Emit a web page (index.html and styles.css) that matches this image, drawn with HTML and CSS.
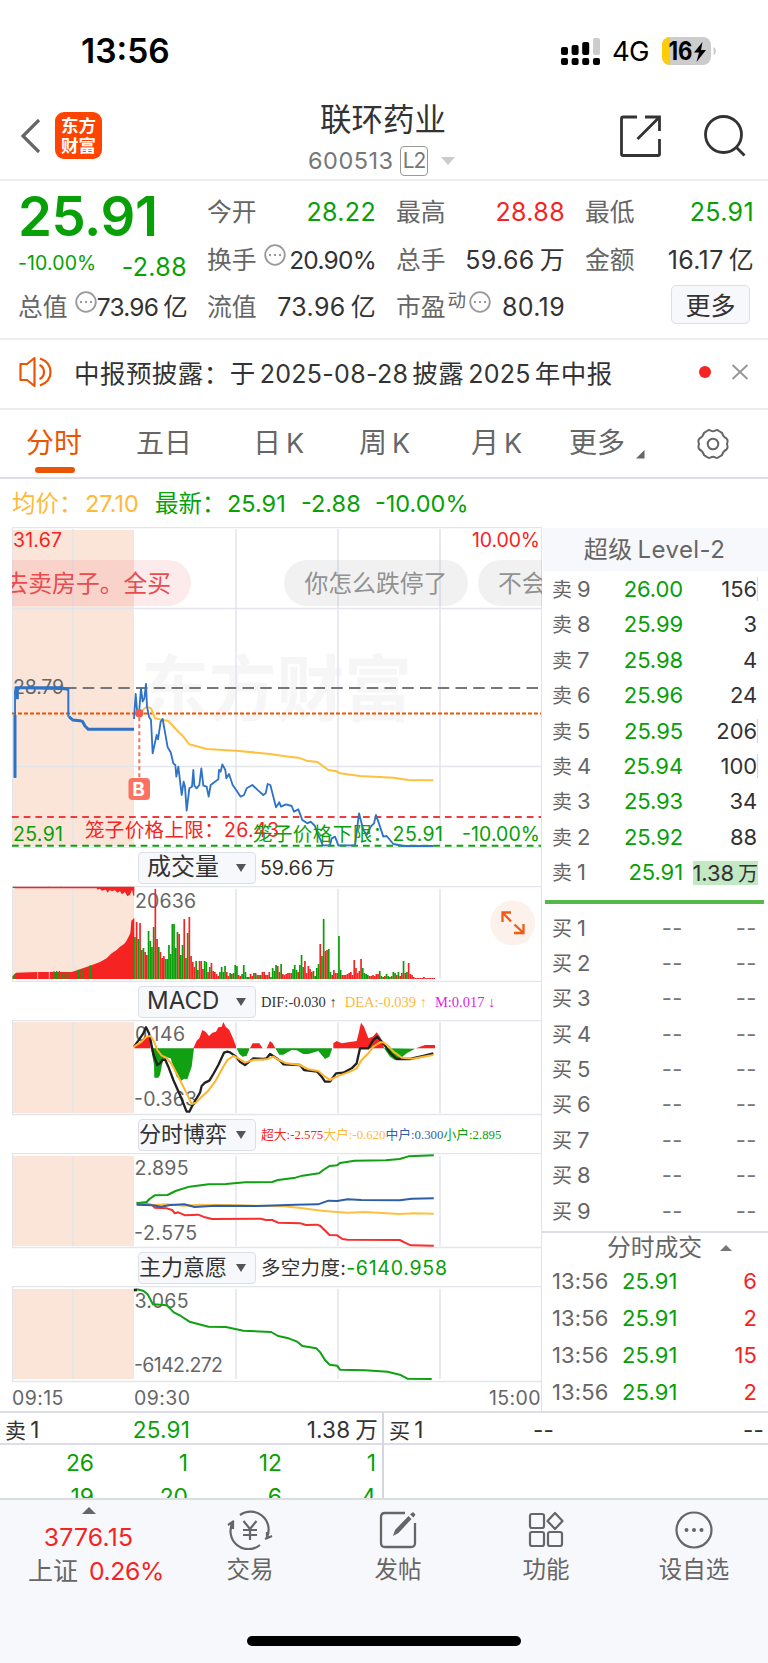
FILE: index.html
```html
<!DOCTYPE html>
<html lang="zh-CN">
<head>
<meta charset="utf-8">
<title>联环药业 600513</title>
<link rel="stylesheet" href="styles.css">
</head>
<body>
<div class="status">
  <span class="clock">13:56</span>
  <svg class="signal" width="40" height="28" viewBox="0 0 40 28"><g fill="#000"><rect x="0" y="9" width="7" height="8" rx="2"/><rect x="10.600000000000001" y="7" width="7" height="10" rx="2"/><rect x="21.2" y="4" width="7" height="13" rx="2"/><rect x="0" y="20" width="7" height="7" rx="2"/><rect x="10.6" y="20" width="7" height="7" rx="2"/><rect x="21.2" y="20" width="7" height="7" rx="2"/><rect x="32" y="20" width="7" height="7" rx="2"/></g><rect x="32" y="0" width="7" height="17" rx="2" fill="#ccc"/></svg>
  <span class="net">4G</span>
  <svg class="battery" width="56" height="28" viewBox="0 0 56 28"><defs><clipPath id="cell"><rect width="49" height="28" rx="8"/></clipPath></defs><g clip-path="url(#cell)"><rect width="49" height="28" fill="#ccc"/><rect width="8" height="28" fill="#ffcc0a"/></g><path d="M51.500 10Q54 11 54 14T51.500 18Z" fill="#ccc"/><text x="6.500" y="23" textLength="24" lengthAdjust="spacingAndGlyphs" font-weight="700" font-size="25">16</text><path d="M40.500 5L32 15.500H37L34.500 25L44 13H39Z"/></svg>
</div>

<header class="head">
  <svg class="back" width="22" height="36" viewBox="0 0 22 36"><path d="M19 2L3 18L19 34" fill="none" stroke="#666" stroke-width="3.200"/></svg>
  <div class="logo">东方<br>财富</div>
  <div class="title">
    <div class="name">联环药业</div>
    <div class="code"><span>600513</span><b>L2</b><i></i></div>
  </div>
  <svg class="share" width="44" height="44" viewBox="0 0 44 44"><path d="M18 3H4Q2.500 3 2.500 4.500V40Q2.500 41.500 4 41.500H39Q40.500 41.500 40.500 40V25M26 3H40.500V17M40 3.500L18.500 25" fill="none" stroke="#333" stroke-width="2.800"/></svg>
  <svg class="search" width="44" height="44" viewBox="0 0 44 44"><circle cx="20.500" cy="20.500" r="18" fill="none" stroke="#333" stroke-width="2.800"/><path d="M33 33L41.500 41.500" stroke="#333" stroke-width="2.800"/></svg>
</header>

<section class="quote">
  <div class="col">
    <div class="price">25.91</div>
    <div class="pair chg"><span class="pct">-10.00%</span><span>-2.88</span></div>
    <div class="pair tight"><label>总值</label><svg class="info" viewBox="0 0 22 22"><circle cx="11" cy="11" r="9.800"/><path d="M5 11h2M10 11h2M15 11h2"/></svg><span>73.96<em>亿</em></span></div>
  </div>
  <div class="col">
    <div class="pair"><label>今开</label><span class="g">28.22</span></div>
    <div class="pair tight"><label>换手</label><svg class="info" viewBox="0 0 22 22"><circle cx="11" cy="11" r="9.800"/><path d="M5 11h2M10 11h2M15 11h2"/></svg><span>20.90%</span></div>
    <div class="pair"><label>流值</label><span>73.96<em>亿</em></span></div>
  </div>
  <div class="col">
    <div class="pair"><label>最高</label><span class="r">28.88</span></div>
    <div class="pair"><label>总手</label><span>59.66<em>万</em></span></div>
    <div class="pair"><label>市盈<sup>动</sup></label><svg class="info near" viewBox="0 0 22 22"><circle cx="11" cy="11" r="9.800"/><path d="M5 11h2M10 11h2M15 11h2"/></svg><span>80.19</span></div>
  </div>
  <div class="col">
    <div class="pair"><label>最低</label><span class="g">25.91</span></div>
    <div class="pair"><label>金额</label><span>16.17<em>亿</em></span></div>
    <div class="pair"><button class="more">更多</button></div>
  </div>
</section>

<section class="notice">
  <svg width="34" height="32" viewBox="0 0 34 32" fill="none" stroke="#ea5504" stroke-width="2.200" stroke-linejoin="round"><path d="M15.500 2L8 8H1.500V24H8L15.500 30Z"/><path d="M21 2.500Q31.500 6 31.500 16T21 29.500M20.500 9Q25 11 25 16T20.500 23"/></svg>
  <span class="msg">中报预披露：于<em>2025-08-28</em>披露<em>2025</em>年中报</span>
  <i class="dot"></i>
  <svg width="18" height="18" viewBox="0 0 18 18"><path d="M1.500 2L16.500 16M16.500 2L1.500 16" stroke="#999" stroke-width="2"/></svg>
</section>

<nav class="tabs">
  <span class="on">分时</span><span>五日</span><span>日<em>K</em></span><span>周<em>K</em></span><span>月<em>K</em></span><span>更多</span>
  <svg class="corner" width="9" height="9" viewBox="0 0 9 9"><path d="M8.500 0V8.500H0Z" fill="#666"/></svg>
  <svg class="gear" width="34" height="34" viewBox="0 0 34 34" fill="none" stroke="#666" stroke-width="2"><path d="M11 4Q13 2.500 14.500 3.500Q17 5 19.500 3.500Q21 2.500 23 4L26 6Q27.200 10 30.500 11.500Q32 13 31.500 15Q30.500 17 31.500 19Q32 21 30.500 22.500Q27.200 24 26 28L23 30Q21 31.500 19.500 30.500Q17 29 14.500 30.500Q13 31.500 11 30L8 28Q6.800 24 3.500 22.500Q2 21 2.500 19Q3.500 17 2.500 15Q2 13 3.500 11.500Q6.800 10 8 6Z"/><circle cx="17" cy="17" r="5.300"/></svg>
</nav>

<div class="avg"><span class="y">均价：</span><span class="y v1">27.10</span><span class="g">最新：</span><span class="g v2">25.91</span><span class="g v3">-2.88</span><span class="g">-10.00%</span></div>

<main class="board">
  <div class="charts">
    <svg class="plot" width="530" height="321" viewBox="12 527 530 321">
      <text x="141" y="715" font-size="72" font-weight="700" fill="#f6f6f6" textLength="271" lengthAdjust="spacingAndGlyphs">东方财富</text>
      <rect x="12" y="530" width="122" height="316" fill="#fbe5d9"/>
      <path class="grid" d="M73 529V847M236 529V847M338 529V847M440 529V847M12 608.500H541M12 766.500H541M12 847.500H541M12 527.500H541M12.500 527V848"/>
      <path d="M0 560H168a23 23 0 0 1 0 46H0Z" fill="#eb3c46" fill-opacity=".11"/>
      <rect x="284" y="560" width="184" height="46" rx="23" fill="#777" fill-opacity=".1"/>
      <rect x="478" y="560" width="160" height="46" rx="23" fill="#777" fill-opacity=".1"/>
      <g font-size="23.800"><text x="4.500" y="592" fill="#e94b4f">去卖房子。全买</text><text x="304.500" y="592" fill="#929292">你怎么跌停了</text><text x="498" y="592" fill="#929292">不会</text></g>
      <path d="M65 688H541" stroke="#777" stroke-width="2" stroke-dasharray="11.500 6.250" stroke-dashoffset="0"/>
      <path d="M12 713.500H541" stroke="#ea5504" stroke-width="2" stroke-dasharray="4 2"/>
      <path d="M12 817H541" stroke="#ee3b40" stroke-width="2" stroke-dasharray="6.700 5"/>
      <path d="M12 845.700H541" stroke="#11a011" stroke-width="2" stroke-dasharray="6.700 5"/>
      <text class="ax" x="13" y="694" textLength="51" fill="#666">28.79</text>
      <g transform="translate(0 520) scale(.33333)" fill="none" stroke-linejoin="round">
        <path stroke="#ffc040" stroke-width="6" d="M425 572L440 560 453 565 465 595 490 600 505 603 530 630 550 650 568 673 620 687 708 692 810 702 850 708 895 713 920 722 952 726 985 750 1010 754 1020 760 1080 768 1180 773 1225 780 1300 781"/>
        <path stroke="#2f73c4" stroke-width="6" d="M45 503L205 508V590"/>
        <path stroke="#2f73c4" stroke-width="9" d="M45 773V585M48 510V503H95L180 503 205 508M52 510V538M207 590L218 600 240 602 248 605 255 618 265 628 402 628"/>
        <path stroke="#2f73c4" stroke-width="5.500" d="M45 773V510M402 597L407 522 412 580 418 568 423 505 428 545 433 535 438 492 441 560 447 590 453 600 458 700 470 645 474 658 482 605 488 597 503 682 512 697 520 730 526 735 529 770 535 740 545 825 551 785 555 800 560 872 568 805 576 800 580 750 583 797 590 805 598 795 604 745 610 797 620 800 626 830 632 795 645 785 655 778 657 750 662 755 667 733 676 750 679 775 687 762 698 795 712 815 722 830 732 825 740 805 757 795 775 812 790 825 797 820 803 792 811 795 820 830 828 862 838 847 843 860 858 853 875 858 882 875 895 868 907 900 922 910 932 905 945 918 952 940 962 960 968 976 990 976 995 955 1005 950 1015 976 1065 976 1077 880 1090 930 1100 945 1112 920 1122 910 1128 885 1135 905 1150 950 1160 948 1180 972 1210 978 1300 978"/>
        <path stroke="#f27466" stroke-width="6" stroke-dasharray="12 9" d="M418 592V772"/>
      </g>
      <circle cx="139.300" cy="713.300" r="4.300" fill="#ee5b4f"/>
      <rect x="128.500" y="778" width="21.500" height="22" rx="4" fill="#fb7262"/>
      <text x="132.300" y="796" font-size="19" font-weight="700" fill="#fff">B</text>
      <text class="ax" x="13" y="547" textLength="49" fill="#f62323">31.67</text>
      <text class="ax" x="472" y="547" textLength="68" fill="#f62323">10.00%</text>
      <text class="ax" x="13" y="841" textLength="50" fill="#07a007">25.91</text>
      <text x="85" y="837" font-size="19.500" textLength="194" fill="#f62323">笼子价格上限：26.43</text>
      <text x="253" y="841" font-size="19.500" textLength="190" fill="#07a007">笼子价格下限：25.91</text>
      <text class="ax" x="462" y="841" textLength="78" fill="#07a007">-10.00%</text>
    </svg>

    <div class="ind"><span class="pick wide">成交量<i></i></span><span class="val">59.66<em>万</em></span></div>
    <svg class="plot" width="530" height="96" viewBox="12 886 530 96">
      <rect x="12" y="887" width="122" height="92" fill="#fbe5d9"/>
      <path class="grid" d="M73 889V979M236 889V979M338 889V979M440 889V979M12 886.500H541M12 981.500H541M12.500 886V982"/>
      <text class="ax" x="135" y="908" textLength="61" fill="#666">20636</text>
      <g transform="translate(0 850) scale(.33333)">
        <path fill="#f62323" d="M38 387V378L48 368 110 366 215 366 240 358 270 347 300 336 320 325 335 310 350 300 360 290 372 282 378 275 385 262 391 250 394 212 403 203V387ZM45 110V115H290L293 119 300 116 305 122 318 119 322 128 330 120 335 124 345 121 352 128 360 124 366 133 375 126 382 139 390 134 396 120 400 137 403 137V110Z"/>
        <path stroke="#11a011" stroke-width="4" d="M40 387V378M45 387V372M162 387V364M170 387V363M178 387V363M185 387V372M190 387V371M196 387V371M202 387V368M208 387V367M236 387V359M246 387V356M271 387V346M38 112H47M145 112H149M179 112H184"/>
        <path stroke="#fff" stroke-width="2" d="M113 366V387M148 366V387"/>
      </g>
      <g id="volume"></g>
      <circle cx="512.700" cy="923" r="22.500" fill="#fdf1eb"/>
      <path d="M502.500 922V912.500H511M503.500 913.500L511 921.500M523.500 924V933H514M522.500 932L514.500 924.500" fill="none" stroke="#ef5b14" stroke-width="2.300"/>
    </svg>

    <div class="ind"><span class="pick wide">MACD<i></i></span><span class="serif">DIF:-0.030 ↑</span><span class="serif y s2">DEA:-0.039 ↑</span><span class="serif m s3">M:0.017 ↓</span></div>
    <svg class="plot" width="530" height="96" viewBox="12 1020 530 96">
      <rect x="12" y="1022" width="122" height="91" fill="#fbe5d9"/>
      <path class="grid" d="M73 1022V1113M236 1022V1113M338 1022V1113M440 1022V1113M12 1020.500H541M12 1114.500H541M12.500 1020V1115"/>
      <text class="ax" x="135" y="1041" textLength="50" fill="#666">0.146</text>
      <text class="ax" x="134" y="1106" textLength="63" fill="#666">-0.363</text>
      <g transform="translate(0 850) scale(.33333)">
        <path fill="#f62323" d="M402 595L410 582 425 575 435 560 446 558 452 575V595ZM580 595L590 572 598 565 607 540 617 545 627 558 637 548 648 545 655 532 665 530 670 516 677 530 688 540 697 560 708 588V595ZM750 595L758 580 778 580 788 595ZM800 595L810 573 818 580 826 595ZM1000 595V580L1010 573 1025 580 1070 573 1076 550 1083 518 1092 530 1105 565 1118 560 1130 547 1140 560 1150 585 1152 595ZM1248 595L1275 585H1305V595Z"/>
        <path fill="#11a011" d="M453 595L462 645 463 683 475 683 480 675 486 645 492 620 512 625 518 645 530 680 545 692 552 686 562 688 575 650 582 595ZM710 595L718 612 728 620 740 617 748 598V595ZM826 595L838 614 850 614 860 608 875 600 890 601 910 612 925 612 955 603 965 615 975 627 988 620 996 598V595ZM1152 595L1170 620 1185 630 1200 626 1220 610 1245 596Z"/>
        <path stroke="#777" stroke-opacity=".35" d="M402 595H1305"/>
        <g fill="none" stroke-linejoin="round"><path stroke="#222" stroke-width="7" d="M402 590L415 572 430 550 438 532 447 550 452 572 460 612 472 645 480 640 487 630 495 628 505 650 520 690 540 735 560 785 568 785 578 765 600 728 605 708 615 698 628 692 640 672 655 645 672 608 682 605 690 607 708 620 720 635 735 645 745 637 760 625 790 627 800 625 810 612 825 622 840 632 850 643 900 645 912 660 952 665 965 680 975 695 990 695 1008 670 1030 668 1055 655 1070 640 1080 595 1105 595 1120 570 1132 560 1150 580 1170 608 1190 627 1230 627 1270 618 1300 610"/>
        <path stroke="#ffb52a" stroke-width="6" d="M402 590L425 575 440 560 452 558 462 575 472 600 485 617 498 622 515 642 535 680 560 730 575 762 588 758 605 740 625 722 645 695 670 650 682 630 700 618 715 625 735 638 760 630 800 628 820 620 840 632 860 640 900 645 925 658 955 663 975 680 990 690 1010 680 1050 665 1070 655 1085 630 1105 610 1120 590 1140 577 1150 577 1165 588 1180 605 1205 623 1240 626 1270 620 1300 615"/></g>
      </g>
    </svg>

    <div class="ind low"><span class="pick">分时博弈<i></i></span><span class="serif sm"><b class="r">超大:-2.575</b><b class="y">大户:-0.620</b><b class="b">中户:0.300</b><b class="g">小户:2.895</b></span></div>
    <svg class="plot" width="530" height="96" viewBox="12 1153 530 96">
      <rect x="12" y="1156" width="122" height="90" fill="#fbe5d9"/>
      <path class="grid" d="M73 1156V1246M236 1156V1246M338 1156V1246M440 1156V1246M12 1153.500H541M12 1247.500H541M12.500 1153V1248"/>
      <text class="ax" x="134.500" y="1175" textLength="54" fill="#666">2.895</text>
      <text class="ax" x="134" y="1240" textLength="63" fill="#666">-2.575</text>
      <g transform="translate(0 1110) scale(.3476 .33333)" fill="none" stroke-width="6" stroke-linejoin="round">
        <path stroke="#f62f2f" d="M393 278L420 282 438 285 445 293 480 295 495 300 503 310 513 307 533 316 570 314 590 322 610 327 750 326 765 330 783 330 800 338 865 340 880 345 912 344 922 348 948 375 970 376 985 387 1000 389 1150 390 1165 398 1182 406 1248 407"/>
        <path stroke="#ffc040" d="M393 282L440 285 480 283 530 287 575 284 690 286 815 289 865 294 925 302 960 305 1000 308 1048 306 1150 312 1190 310 1248 311"/>
        <path stroke="#2f5ea8" d="M393 284L440 286 463 290 490 285 530 283 560 291 620 287 740 288 850 284 915 283 945 272 970 273 1000 268 1040 270 1150 271 1185 266 1248 265"/>
        <path stroke="#11a011" d="M393 280L422 276 430 267 445 256 482 255 505 243 545 230 600 223 650 222 705 217 783 216 800 210 850 203 870 197 918 190 930 180 948 168 970 166 978 159 1020 152 1110 151 1150 147 1175 139 1248 136"/>
      </g>
    </svg>

    <div class="ind low"><span class="pick">主力意愿<i></i></span><span class="val v">多空力度:<b class="g">-6140.958</b></span></div>
    <svg class="plot" width="530" height="97" viewBox="12 1286 530 97">
      <rect x="12" y="1289" width="122" height="90" fill="#fbe5d9"/>
      <path class="grid" d="M73 1289V1379M236 1289V1379M338 1289V1379M440 1289V1379M12 1286.500H541M12 1381.500H541M12.500 1286V1382"/>
      <text class="ax" x="134.500" y="1308" textLength="54" fill="#666">3.065</text>
      <text class="ax" x="134" y="1372" textLength="89" fill="#666">-6142.272</text>
      <g transform="translate(0 1110) scale(.3476 .33333)" fill="none"><path stroke="#11a011" stroke-width="6" stroke-linejoin="round" d="M393 538L412 542 425 553 440 583 480 586 500 607 520 618 545 635 600 650 650 651 700 662 780 666 800 678 830 685 855 695 870 708 910 715 922 728 935 750 948 764 970 767 978 779 1050 781 1115 785 1150 794 1172 806 1242 807"/><path stroke="#222" stroke-width="8" d="M385 540H394"/></g>
    </svg>
    <div class="times"><span>09:15</span><span class="t2">09:30</span><span class="t3">15:00</span></div>
  </div>

  <aside class="book">
    <div class="lv">超级<em>Level-2</em></div>
    <div class="rows sell">
      <div><label>卖<em>9</em></label><span>26.00</span><b class="tick">156</b></div>
      <div><label>卖<em>8</em></label><span>25.99</span><b>3</b></div>
      <div><label>卖<em>7</em></label><span>25.98</span><b>4</b></div>
      <div><label>卖<em>6</em></label><span>25.96</span><b>24</b></div>
      <div><label>卖<em>5</em></label><span>25.95</span><b class="tick">206</b></div>
      <div><label>卖<em>4</em></label><span>25.94</span><b class="tick">100</b></div>
      <div><label>卖<em>3</em></label><span>25.93</span><b>34</b></div>
      <div><label>卖<em>2</em></label><span>25.92</span><b>88</b></div>
      <div><label>卖<em>1</em></label><span>25.91</span><b class="fill">1.38<em>万</em></b></div>
    </div>
    <div class="bar"></div>
    <div class="rows buy">
      <div><label>买<em>1</em></label><span>--</span><b>--</b></div>
      <div><label>买<em>2</em></label><span>--</span><b>--</b></div>
      <div><label>买<em>3</em></label><span>--</span><b>--</b></div>
      <div><label>买<em>4</em></label><span>--</span><b>--</b></div>
      <div><label>买<em>5</em></label><span>--</span><b>--</b></div>
      <div><label>买<em>6</em></label><span>--</span><b>--</b></div>
      <div><label>买<em>7</em></label><span>--</span><b>--</b></div>
      <div><label>买<em>8</em></label><span>--</span><b>--</b></div>
      <div><label>买<em>9</em></label><span>--</span><b>--</b></div>
    </div>
    <div class="deal">分时成交<i></i></div>
    <div class="trades">
      <div><label>13:56</label><span>25.91</span><b>6</b></div>
      <div><label>13:56</label><span>25.91</span><b>2</b></div>
      <div><label>13:56</label><span>25.91</span><b>15</b></div>
      <div><label>13:56</label><span>25.91</span><b>2</b></div>
    </div>
  </aside>
</main>

<section class="queue">
  <div class="half left">
    <div class="top"><label>卖<em>1</em></label><span class="g">25.91</span><b>1.38<em>万</em></b></div>
    <div class="nums"><span>26</span><span>1</span><span>12</span><span>1</span><span>19</span><span>20</span><span>6</span><span>4</span></div>
  </div>
  <div class="half">
    <div class="top"><label>买<em>1</em></label><span>--</span><b>--</b></div>
  </div>
</section>

<footer class="dock">
  <div class="index"><i></i><div class="pt">3776.15</div><div class="ln">上证<em>0.26%</em></div></div>
  <div class="items">
    <div><svg width="46" height="40" viewBox="0 0 46 40" fill="none" stroke="#666" stroke-width="2.200"><path d="M13 5A18 18 0 0 1 40 27M33 35A18 18 0 0 1 6 12M1 15L7 11M6 12V19M45 26L38 29M40 29V22M16.500 11L23 19L29.500 11M23 19V30M16 20H30M16 25H30"/></svg><span>交易</span></div>
    <div><svg width="46" height="40" viewBox="0 0 46 40"><path d="M30 3H10Q6 3 6 7V33Q6 37 10 37H36Q40 37 40 33V13" fill="none" stroke="#666" stroke-width="2.300"/><path d="M18 26L20 20L33.500 6L36.500 9L23.500 23ZM35 4.500L38 2L40.500 4.500L38.500 7.500Z" fill="#666"/></svg><span>发帖</span></div>
    <div><svg width="46" height="40" viewBox="0 0 46 40" fill="none" stroke="#666" stroke-width="2.200"><rect x="7" y="4" width="14" height="14" rx="2"/><rect x="7" y="22" width="14" height="14" rx="2"/><rect x="25" y="22" width="14" height="14" rx="2"/><path d="M32 3L39.500 11L32 19L24.500 11Z" stroke-linejoin="round"/></svg><span>功能</span></div>
    <div><svg width="46" height="40" viewBox="0 0 46 40"><circle cx="23" cy="20" r="17.500" fill="none" stroke="#666" stroke-width="2.200"/><g fill="#666"><circle cx="15.500" cy="20" r="2"/><circle cx="23" cy="20" r="2"/><circle cx="30.500" cy="20" r="2"/></g></svg><span>设自选</span></div>
  </div>
  <div class="home"></div>
</footer>
<script src="volume.js"></script>
</body>
</html>
```

FILE: styles.css
```css
* { box-sizing: border-box; }
body {
  margin: 0;
  width: 768px;
  height: 1663px;
  overflow: hidden;
  background: #fff;
  color: #333;
  font-family: Inter, "Noto Sans CJK SC", sans-serif;
  font-size: 24.5px;
}
svg { display: block; flex: none; }
em, i, b { font-style: normal; font-weight: 400; }
.g { color: #07a007; }
.r { color: #f62323; }
.y { color: #ffb938; }
.b { color: #2f5ea8; }
.m { color: #e01ce8; }

.status { display: flex; height: 104px; padding-left: 81px; line-height: 103px; color: #000; }
.clock { width: 480px; font-size: 33.5px; font-weight: 600; letter-spacing: 0; }
.signal { margin-top: 38px; }
.net { width: 61px; padding-left: 11px; font-size: 27.5px; letter-spacing: -.7px; }
.battery { margin-top: 37px; }

.head { display: flex; height: 77px; border-bottom: 2px solid #ececee; }
.back { margin: 14px 0 0 20px; }
.logo { width: 47px; height: 47px; margin: 8px 0 0 13px; padding-top: 4px; border-radius: 9px; background: #ff4400; color: #fff; font-size: 17.5px; font-weight: 700; line-height: 19.5px; text-align: center; }
.title { width: 516px; padding-left: 206px; }
.name { padding-left: 12px; height: 40px; margin-top: -4px; font-size: 31.5px; line-height: 40px; }
.code { display: flex; align-items: center; height: 42px; font-size: 23.5px; color: #777; line-height: 42px; }
.code span { width: 92px; letter-spacing: .5px; }
.code b { width: 28px; height: 30px; border: 1.500px solid #999; border-radius: 4px; font-size: 21px; line-height: 28px; text-align: center; letter-spacing: -1px; }
.code i { margin: -1px 0 0 13px; border: 7px solid transparent; border-top: 8px solid #ccc; border-bottom: 0; }
.share { margin: 10px 0 0 0; }
.search { margin: 10px 0 0 40px; }
.head .title + .share { margin-left: 1px; }

.quote { display: grid; grid-template-columns: repeat(4, 169px); column-gap: 20px; height: 159px; padding: 7px 13px 0 18px; border-bottom: 2px solid #ececee; }
.pair { display: flex; height: 47.500px; line-height: 48px; white-space: nowrap; font-size: 25px; letter-spacing: .35px; }
.pair.tight { font-size: 24.5px; letter-spacing: -.75px; }
.pair label { color: #666; font-size: 24.8px; letter-spacing: 0; }
.pair > span:last-child { margin-left: auto; }
.pair em, .top em { margin-left: 5px; }
.price { height: 47.500px; color: #07a007; font-size: 54.5px; font-weight: 600; line-height: 56px; letter-spacing: -.4px; }
.chg { color: #07a007; padding-top: 7px; }
.chg .pct { margin-top: -4px; font-size: 19.5px; letter-spacing: .1px; }
.info { width: 22px; height: 22px; margin: 8px 0 0 7px; fill: none; stroke: #999; stroke-width: 1.800; }
.near { margin-left: 3px; }
.pair sup { font-size: 18.5px; line-height: 0; vertical-align: 9px; margin-left: 2px; }
.more { width: 79px; height: 39px; margin: 2px 4px 0 auto; padding: 0; border: 1.500px solid #dcdfe6; border-radius: 5px; background: #f7f8fb; color: #333; font: 25px/33px "Noto Sans CJK SC", sans-serif; }

.notice { display: flex; align-items: center; height: 70px; padding: 0 19px 4px; border-bottom: 2px solid #ececee; }
.msg { width: 625px; margin: -2px 0 0 21px; font-size: 25.500px; letter-spacing: .45px; }
.msg em { margin: 0 4px; font-size: 25px; letter-spacing: .3px; }
.dot { width: 12px; height: 12px; margin-right: 20px; border-radius: 50%; background: #f62323; }

.tabs { position: relative; display: grid; grid-template-columns: 110px 117px 106px 112px 98px 67px 27px auto; height: 69px; padding-left: 26px; border-bottom: 2px solid #dcdde6; color: #666; font-size: 28px; line-height: 67px; }
.tabs em { margin-left: 5px; font-size: 27px; }
.tabs .on { position: relative; color: #ea5504; }
.tabs .on::after { content: ""; position: absolute; left: 9px; top: 57px; width: 40px; height: 6px; border-radius: 3px; background: #ea5504; }
.corner { margin-top: 40px; }
.gear { margin: 17px 0 0 33px; }

.avg { display: flex; height: 48px; padding-left: 12px; font-size: 23.500px; line-height: 49px; letter-spacing: 0; white-space: nowrap; }
.avg .y:first-child { width: 73px; }
.avg .v1 { width: 70px; }
.avg .g:nth-child(3) { width: 72px; }
.avg .v2 { width: 74px; }
.avg .v3 { width: 74px; }

.board { display: flex; height: 884px; padding-left: 12px; }
.charts { width: 530px; border-right: 1.500px solid #e2e3ea; }
.grid { stroke: #e2e5eb; stroke-width: 1.500; fill: none; }
.ax { font-size: 19.500px; }
.ind { display: flex; height: 38px; padding: 4px 0 0 126px; line-height: 32px; white-space: nowrap; }
.ind.low { height: 37px; padding-top: 3px; }
.pick { display: flex; width: 118px; height: 32px; padding-left: 0; border: 1.500px solid #dcdfe6; border-radius: 4px; background: #f7f8fb; font-size: 22px; line-height: 28px; }
.pick.wide { padding-left: 8px; font-size: 24px; }
.pick i { margin: 11px 9px 0 auto; border: 5px solid transparent; border-top: 8px solid #555; border-bottom: 0; }
.val { margin-left: 4px; font-size: 19.500px; }
.val em { margin-left: 3px; }
.val.v { margin-left: 5px; letter-spacing: .3px; }
.val b { letter-spacing: .75px; }
.serif { margin-left: 5px; font-family: "Liberation Serif", "Noto Sans CJK SC", serif; font-size: 14.500px; }
.serif.s2, .serif.s3 { margin-left: 8px; }
.sm { font-size: 12.800px; }
.times { position: relative; display: flex; height: 29px; color: #666; font-size: 19.500px; line-height: 30px; letter-spacing: .4px; }
.times span { width: 122px; }
.times .t3 { margin-left: auto; width: auto; }

.book { width: 226px; }
.lv { height: 43px; margin: 1px 0 1px 1px; background: #f7f8fb; color: #666; text-align: center; font-size: 24px; letter-spacing: .4px; line-height: 43px; padding-right: 2px; }
.lv em { margin-left: 5px; }
.rows { color: #333; font-size: 22px; }
.rows > div { display: grid; grid-template-columns: 50px 81px 1fr; height: 35.400px; padding: 0 11px 0 10px; line-height: 35.400px; letter-spacing: -.1px; }
.rows label { color: #666; font-size: 20px; }
.rows label em { margin-left: 5px; font-size: 22px; }
.rows span { color: #07a007; text-align: right; }
.rows b { justify-self: end; }
.rows .tick { height: 24px; margin: 5px -1px 0 0; border-right: 1px solid #c2e8c4; line-height: 25px; }
.rows .fill { height: 24px; margin: 6px -1px 0 0; background: #c2e8c4; line-height: 24px; }
.fill em { margin-left: 4px; font-size: 20px; letter-spacing: 0; }
.bar { height: 4px; margin: 9px 4px 7px 3px; background: #54b948; }
.buy > div span, .buy > div b { color: #777; letter-spacing: .5px; }
.deal { display: flex; justify-content: center; align-items: center; height: 32px; margin-top: 2px; padding-left: 29px; border-top: 2px solid #dcdde6; color: #666; font-size: 23.800px; line-height: 30px; }
.deal i { margin-left: 18px; border: 6px solid transparent; border-bottom: 6px solid #777; border-top: 0; }
.trades > div { display: grid; grid-template-columns: 70px 60px 1fr; height: 37px; padding: 0 11px 0 10px; line-height: 37px; font-size: 22px; letter-spacing: .1px; }
.trades label { color: #666; }
.trades span { color: #07a007; }
.trades b { color: #f62323; text-align: right; }

.queue { display: grid; grid-template-columns: 384px 384px; height: 87px; overflow: hidden; border-top: 2px solid #dcdde6; }
.half.left { border-right: 2px solid #d4d6de; }
.top { display: grid; grid-template-columns: 70px 115px 1fr; height: 32px; padding: 0 4px 0 5px; border-bottom: 2px solid #dcdde6; line-height: 34px; font-size: 22.500px; letter-spacing: .2px; }
.top label { font-size: 21px; }
.top label em { margin-left: 4px; font-size: 22.500px; }
.top span { text-align: right; }
.top b { text-align: right; }
.half:last-child .top { grid-template-columns: 70px 95px 1fr; }
.nums { display: grid; grid-template-columns: repeat(4, 94px); grid-auto-rows: 33.500px; padding-top: 1px; color: #07a007; text-align: right; line-height: 34px; font-size: 22.800px; }

.dock { position: relative; display: grid; grid-template-columns: 180px 588px; grid-template-rows: 136px 30px; height: 166px; border-top: 2px solid #dcdde0; background: #f7f8fb; color: #666; }
.index { display: flex; flex-direction: column; align-items: center; padding: 7px 0 0; }
.index i { border: 7px solid transparent; border-bottom: 7px solid #666; border-top: 0; margin-left: -3px; }
.pt { height: 37px; color: #f62323; font-size: 24.800px; line-height: 46px; letter-spacing: .2px; margin-left: -3px; }
.ln { padding-left: 12px; line-height: 40px; font-size: 25px; white-space: nowrap; }
.ln em { margin-left: 11px; color: #f62323; font-size: 24.800px; letter-spacing: -.4px; }
.items { display: grid; grid-template-columns: repeat(4, 148px); margin-left: -4px; }
.items div { display: flex; flex-direction: column; align-items: center; padding-top: 10px; font-size: 23.500px; line-height: 36px; }
.items span { margin-top: 2px; }
.home { justify-self: start; width: 274px; height: 10px; margin-left: 247px; border-radius: 5px; background: #000; }
```

FILE: volume.js
```js
// Per-minute volume bars: colour letter followed by height in pixels.
const bars = `g42 r57 g40 r56 g29 g31 r27 r24 g48 g38 g32 g52 r90 r40 g32 r27 r21 r23 g20 g20
g34 g25 g55 g55 g31 g47 r45 g24 g34 r60 g21 g46 r62 r23 r17 r12 g18 g9 r18 r18
r10 g18 g17 r7 g12 r16 r8 r7 r5 r3 g7 g12 g7 g13 r7 r3 g6 r5 g6 g14
g13 r4 r3 g5 g14 g7 g2 g2 r5 r3 g6 r6 g4 r4 g4 r7 r7 r4 r4 r7
g2 g11 g8 g14 r13 r7 g15 r5 r4 r5 r6 r6 r6 g10 g14 g9 r7 g14 g24 g12
r18 r6 r13 r10 g7 r8 g3 g11 g15 r35 g23 g60 r28 r29 g30 g7 r4 r9 r6 r6
g43 g9 r4 r4 r4 r5 r6 r7 r4 r19 r11 r6 r8 r20 g11 g6 g5 g4 r3 r3
r4 r3 r5 r5 g8 g3 g2 r3 g5 g3 g2 r3 g7 g6 r4 g7 r3 r6 g18 r6
g7 r16 r5 r4 r2 r1 r1 r1 r1 r1 r2 r1 r1 r1 r1 r1 r1`.split(/\s+/);
const volume = document.getElementById("volume");
bars.forEach((bar, i) => {
  const height = Number(bar.slice(1));
  const rect = document.createElementNS("http://www.w3.org/2000/svg", "rect");
  rect.setAttribute("x", 134.1 + i * 1.7);
  rect.setAttribute("y", 979 - height);
  rect.setAttribute("width", 1.7);
  rect.setAttribute("height", height);
  rect.setAttribute("fill", bar[0] === "r" ? "#f62323" : "#0a9d0a");
  volume.appendChild(rect);
});
```
